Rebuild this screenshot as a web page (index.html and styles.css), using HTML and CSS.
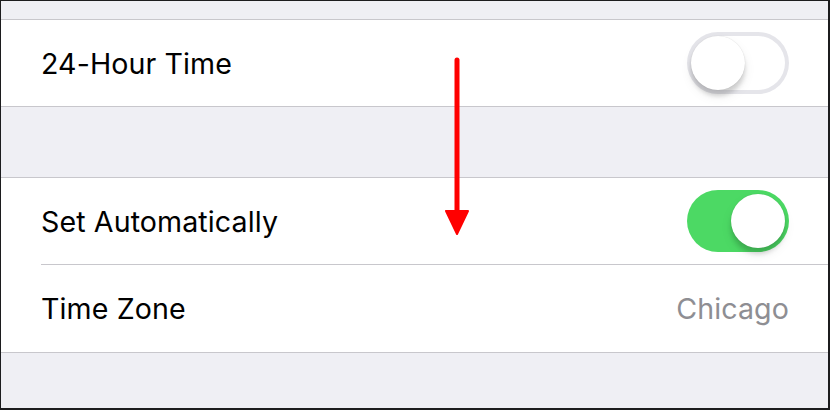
FILE: index.html
```html
<!DOCTYPE html>
<html>
<head>
<meta charset="utf-8">
<link rel="stylesheet" href="styles.css">
</head>
<body>
<div class="frame">
  <div class="gap gap-top"></div>
  <div class="group">
    <div class="row">
      <span class="label">24-Hour Time</span>
      <span class="toggle off"><span class="knob"></span></span>
    </div>
  </div>
  <div class="gap gap-mid"></div>
  <div class="group">
    <div class="row">
      <span class="label">Set Automatically</span>
      <span class="toggle on"><span class="knob"></span></span>
    </div>
    <div class="sep"></div>
    <div class="row row-last">
      <span class="label">Time Zone</span>
      <span class="value">Chicago</span>
    </div>
  </div>
  <div class="gap gap-bottom"></div>
  <svg class="arrow" width="30" height="190" viewBox="0 0 30 190">
    <line x1="15" y1="3" x2="15" y2="165" stroke="#ff0000" stroke-width="5" stroke-linecap="round"/>
    <path d="M4 154 L26 154 L15 177 Z" fill="#ff0000" stroke="#ff0000" stroke-width="2" stroke-linejoin="round"/>
  </svg>
</div>
</body>
</html>
```

FILE: styles.css
```css
* { box-sizing: border-box; }
html, body { margin: 0; padding: 0; background: #fff; }
.frame {
  position: relative;
  width: 830px;
  height: 410px;
  border-style: solid;
  border-color: #1c1c1e;
  border-width: 1px 2px 2px 1px;
  background: #efeff4;
  display: flex;
  flex-direction: column;
  font-family: "Inter", "Liberation Sans", sans-serif;
  overflow: hidden;
}
.gap-top { height: 18px; }
.gap-mid { height: 70px; }
.gap-bottom { flex: 1; }
.group {
  background: #fff;
  border-top: 1px solid #c8c7cc;
  border-bottom: 1px solid #c8c7cc;
}
.row {
  height: 86px;
  display: flex;
  align-items: center;
  justify-content: space-between;
  padding: 0 39px 0 40px;
}
.row-last { height: 87px; }
.sep {
  height: 1px;
  margin-left: 40px;
  background: #c8c7cc;
}
.label {
  font-size: 28.6px;
  color: #000;
  letter-spacing: 0.1px;
}
.value {
  font-size: 28.6px;
  color: #8e8e93;
  letter-spacing: 0.1px;
}
.toggle {
  position: relative;
  width: 102px;
  height: 62px;
  border-radius: 31px;
  flex: none;
}
.toggle.off {
  background: #fff;
  box-shadow: inset 0 0 0 4px #e5e5ea;
}
.toggle.on {
  background: #4cd964;
}
.knob {
  position: absolute;
  top: 4px;
  width: 54px;
  height: 54px;
  border-radius: 50%;
  background: #fff;
  box-shadow: 0 6px 4px rgba(0,0,0,0.14), 0 0 1px rgba(0,0,0,0.18), 0 6px 12px rgba(0,0,0,0.08);
}
.toggle.off .knob { left: 4px; }
.toggle.on .knob { left: 44px; }
.arrow {
  position: absolute;
  left: 441px;
  top: 56px;
}
```
